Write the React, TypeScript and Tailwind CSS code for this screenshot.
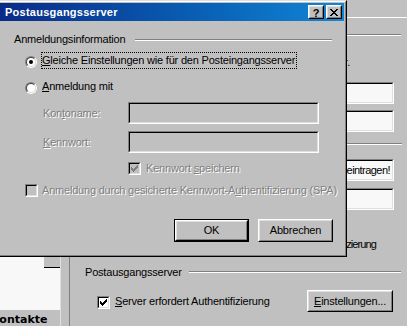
import React from "react";

function Pix({ rows, color }: { rows: string[]; color: string }) {
  const rects: React.ReactNode[] = [];
  rows.forEach((r, y) =>
    r.split("").forEach((c, x) => {
      if (c === "#") rects.push(<rect key={`${x}-${y}`} x={x} y={y} width={1} height={1} fill={color} />);
    })
  );
  return (
    <svg width={rows[0].length} height={rows.length} shapeRendering="crispEdges" className="block">
      {rects}
    </svg>
  );
}

const CHECK = ["......#", ".....##", "#...###", "##.###.", "#####..", ".###...", "..#...."];
const XMARK = ["##....##", ".##..##.", "..####..", "...##...", "..####..", ".##..##.", "##....##"];

function Sunken({ className = "", bg = "bg-[#c0c0c0]", children }: { className?: string; bg?: string; children?: React.ReactNode }) {
  return (
    <div className={`border border-t-[#808080] border-l-[#808080] border-b-white border-r-white ${className}`}>
      <div className={`h-full w-full border border-t-black border-l-black border-b-[#dfdfdf] border-r-[#dfdfdf] ${bg}`}>{children}</div>
    </div>
  );
}

function Raised({ className = "", children }: { className?: string; children?: React.ReactNode }) {
  return (
    <div className={`border border-t-white border-l-white border-b-black border-r-black bg-[#c0c0c0] ${className}`}>
      <div className="h-full w-full border border-t-[#dfdfdf] border-l-[#dfdfdf] border-b-[#808080] border-r-[#808080] flex items-center justify-center">
        {children}
      </div>
    </div>
  );
}

function Check({ checked, disabled }: { checked?: boolean; disabled?: boolean }) {
  return (
    <Sunken className="w-[13px] h-[13px] shrink-0" bg={disabled ? "bg-[#c0c0c0]" : "bg-white"}>
      {checked && (
        <div className="m-[1px]">
          <Pix rows={CHECK} color={disabled ? "#808080" : "#000"} />
        </div>
      )}
    </Sunken>
  );
}

function Radio({ checked }: { checked?: boolean }) {
  return (
    <div className="w-[12px] h-[12px] shrink-0 rounded-full border border-t-[#808080] border-l-[#808080] border-b-white border-r-white">
      <div className="h-full w-full rounded-full border border-t-[#404040] border-l-[#404040] border-b-[#dfdfdf] border-r-[#dfdfdf] bg-white flex items-center justify-center">
        {checked && <div className="w-[4px] h-[4px] rounded-full bg-black" />}
      </div>
    </div>
  );
}

const dis = "text-[#808080] [text-shadow:1px_1px_0_#ffffff]";

export default function App() {
  return (
    <div className="relative w-[407px] h-[326px] overflow-hidden bg-[#c0c0c0] text-[11px] leading-[13px] tracking-[-0.2px] text-black font-['Liberation_Sans',Arial,sans-serif]">
      {/* background window */}
      <div className="flex h-full">
        <div className="w-[60px] flex flex-col">
          <div className="flex-1 bg-[#f8f8f8] flex flex-col items-end">
            <div className="mt-[257px] w-[16px] h-[11px] bg-[#c0c0c0] border-b border-black" />
          </div>
          <div className="h-[16px] bg-[#c0c0c0] pt-[3px] overflow-hidden whitespace-nowrap font-['DejaVu_Sans',sans-serif] font-bold text-[11px] leading-[13px] tracking-normal">
            <span className="ml-[-9px]">Kontakte</span>
          </div>
        </div>
        <div className="w-[10px] bg-[#c0c0c0] border-l border-l-[#dfdfdf] border-r border-r-[#808080]" />
        <div className="flex-1 flex flex-col items-end">
          <div className="mt-[17px] w-full h-px bg-white" />
          <div className="mt-[16px] mr-[6px] w-[300px] h-[2px] border-t border-t-[#808080] border-b border-b-white" />
          <div className="mt-[20px] mr-[57px] whitespace-nowrap">Der Posteingangsserver ist ein POP3-Server.</div>
          <Sunken className="mt-[13px] mr-[13px] w-[250px] h-[22px]" bg="bg-[#f8f8f8]" />
          <Sunken className="mt-[6px] mr-[13px] w-[250px] h-[22px]" bg="bg-[#f8f8f8]" />
          <div className="mt-[11px] mr-[5px] w-[300px] h-[2px] border-t border-t-[#808080] border-b border-b-white" />
          <Sunken className="mt-[14px] mr-[13px] w-[250px] h-[22px]" bg="bg-[#f8f8f8]">
            <div className="h-full flex items-center justify-end pr-[2px] overflow-hidden whitespace-nowrap tracking-[-0.55px]">
              Bitte Ihren Kontonamen eintragen!
            </div>
          </Sunken>
          <Sunken className="mt-[7px] mr-[13px] w-[250px] h-[22px]" bg="bg-[#f8f8f8]" />
          <div className="mt-[28px] mr-[31px] whitespace-nowrap tracking-[-0.9px]">Anmeldung durch gesicherte Kennwort-Authentifizierung</div>
          <div className="mt-[15px] self-stretch flex items-start pl-[15px] pr-[6px]">
            <span className="whitespace-nowrap">Postausgangsserver</span>
            <div className="flex-1 ml-[7px] mt-[5px] h-[2px] border-t border-t-[#808080] border-b border-b-white" />
          </div>
          <div className="mt-[11px] self-stretch flex items-start pl-[27px] pr-[14px] h-[22px]">
            <div className="mt-[6px]">
              <Check checked />
            </div>
            <span className="ml-[5px] mt-[5px] whitespace-nowrap">
              <span className="underline">S</span>erver erfordert Authentifizierung
            </span>
            <Raised className="ml-auto w-[86px] h-[22px]">
              <span className="whitespace-nowrap">
                <span className="underline">E</span>instellungen...
              </span>
            </Raised>
          </div>
        </div>
      </div>

      {/* dialog */}
      <div className="absolute left-[-4px] top-0 w-[351px] h-[257px] border border-t-[#dfdfdf] border-l-[#dfdfdf] border-b-black border-r-black">
        <div className="h-full w-full border border-t-white border-l-white border-b-[#808080] border-r-[#808080] bg-[#c0c0c0] p-[1px] flex flex-col">
          <div className="h-[18px] shrink-0 flex items-center pl-[6px] pr-[2px] bg-linear-to-r from-[#0b2a88] to-[#1286d6]">
            <span className="text-white font-bold tracking-[0.25px] whitespace-nowrap">Postausgangsserver</span>
            <div className="ml-auto flex gap-[2px]">
              <Raised className="w-[16px] h-[14px]">
                <span className="font-bold text-[11px] leading-[10px] mt-[1px] tracking-normal">?</span>
              </Raised>
              <Raised className="w-[16px] h-[14px]">
                <Pix rows={XMARK} color="#000" />
              </Raised>
            </div>
          </div>

          <div className="flex items-start mt-[12px] pl-[15px] pr-[12px]">
            <span className="whitespace-nowrap">Anmeldungsinformation</span>
            <div className="flex-1 ml-[10px] mt-[6px] h-[2px] border-t border-t-[#808080] border-b border-b-white" />
          </div>

          <div className="mt-[6px] flex items-start pl-[26px]">
            <div className="mt-[4px]">
              <Radio checked />
            </div>
            <span className="ml-[4px] border border-dotted border-black pr-[1px] py-[1px] whitespace-nowrap">
              <span className="underline">G</span>leiche Einstellungen wie für den Posteingangsserver
            </span>
          </div>

          <div className="mt-[9px] flex items-start pl-[26px]">
            <div className="mt-[4px]">
              <Radio />
            </div>
            <span className="ml-[4px] border border-transparent pr-[1px] py-[1px] whitespace-nowrap">
              <span className="underline">A</span>nmeldung mit
            </span>
          </div>

          <div className="mt-[7px] flex items-start pl-[44px]">
            <span className={`w-[85px] pt-[5px] whitespace-nowrap ${dis}`}>
              Kon<span className="underline">t</span>oname:
            </span>
            <Sunken className="w-[191px] h-[22px]" />
          </div>

          <div className="mt-[7px] flex items-start pl-[44px]">
            <span className={`w-[85px] pt-[5px] whitespace-nowrap ${dis}`}>
              <span className="underline">K</span>ennwort:
            </span>
            <Sunken className="w-[191px] h-[22px]" />
          </div>

          <div className="mt-[9px] flex items-start pl-[129px]">
            <Check checked disabled />
            <span className={`ml-[5px] whitespace-nowrap ${dis}`}>
              Kennwort <span className="underline">s</span>peichern
            </span>
          </div>

          <div className="mt-[9px] flex items-start pl-[26px]">
            <Check disabled />
            <span className={`ml-[4px] whitespace-nowrap ${dis}`}>
              Anmeldung durch gesicherte Kennwort-A<span className="underline">u</span>thentifizierung (SPA)
            </span>
          </div>

          <div className="mt-[22px] flex justify-end gap-[9px] pr-[11px]">
            <div className="w-[75px] h-[23px] border border-black">
              <Raised className="w-full h-full">OK</Raised>
            </div>
            <Raised className="w-[75px] h-[23px]">Abbrechen</Raised>
          </div>
        </div>
      </div>
    </div>
  );
}
